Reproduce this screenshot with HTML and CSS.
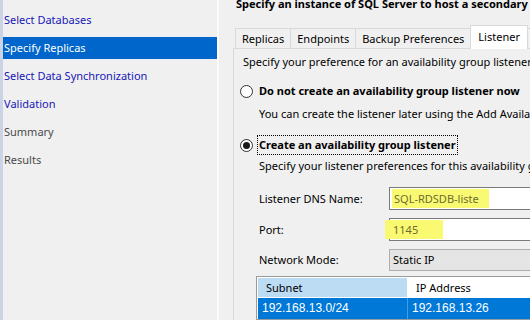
FILE: index.html
```html
<!DOCTYPE html>
<html lang="en">
  <head>
    <meta charset="UTF-8" />
    <meta name="viewport" content="width=device-width, initial-scale=1.0" />
    <title>New Availability Group</title>
    <link rel="stylesheet" href="styles.css">
  </head>
  <body>
    <div class="wizard">
      <!-- Steps list -->
      <nav class="steps">
        <a class="step">Select Databases</a>
        <a class="step step-current">Specify Replicas</a>
        <a class="step">Select Data Synchronization</a>
        <a class="step">Validation</a>
        <span class="step step-off">Summary</span>
        <span class="step step-off">Results</span>
      </nav>
      <div class="split"></div>

      <!-- Page -->
      <main class="page">
        <h1 class="page-title">Specify an instance of SQL Server to host a secondary replica.</h1>

        <div class="tabs">
          <div class="tab">Replicas</div>
          <div class="tab">Endpoints</div>
          <div class="tab">Backup Preferences</div>
          <div class="tab tab-active">Listener</div>
          <div class="tab">Read-Only Routing</div>
        </div>

        <div class="tab-panel">
          <p class="intro">Specify your preference for an availability group listener that will provide a client connection point.</p>

          <div class="option">
            <span class="radio"></span>
            <span class="option-label">Do not create an availability group listener now</span>
          </div>
          <p class="hint">You can create the listener later using the Add Availability Group Listener dialog.</p>

          <div class="option option-focus">
            <span class="radio radio-on"></span>
            <span class="option-label">Create an availability group listener</span>
          </div>
          <p class="hint hint-tight">Specify your listener preferences for this availability group.</p>

          <div class="form">
            <label class="form-label">Listener DNS Name:</label>
            <div class="field"><span class="marker">SQL-RDSDB-liste</span></div>

            <label class="form-label">Port:</label>
            <div class="field"><span class="marker marker-wide">1145</span></div>

            <label class="form-label">Network Mode:</label>
            <div class="combo">Static IP</div>
          </div>

          <div class="grid">
            <div class="grid-head">
              <div class="cell cell-sorted">Subnet</div>
              <div class="cell">IP Address</div>
            </div>
            <div class="grid-row">
              <div class="cell">192.168.13.0/24</div>
              <div class="cell">192.168.13.26</div>
            </div>
          </div>
        </div>
      </main>
    </div>
  </body>
</html>
```

FILE: styles.css
```css
/* base */
body {
  margin: 0;
  padding: 0;
  overflow: hidden;
  background: #f0f0f0;
  font-family: "Noto Sans", "Open Sans", sans-serif;
  font-size: 11px;
  color: #000;
}

p {
  margin: 0;
}

.wizard {
  display: flex;
  width: 700px;
  height: 320px;
  overflow: hidden;
  white-space: nowrap;
}

/* ===== steps ===== */
.steps {
  width: 214px;
  flex-shrink: 0;
  border-left: 3px solid #cbd3e6;
  padding-top: 9px;
  display: flex;
  flex-direction: column;
  gap: 6px;
}

.step {
  height: 22px;
  line-height: 22px;
  padding-left: 1px;
  color: #1717b8;
}

.step-current {
  background: #0066cc;
  color: #fff;
}

.step-off {
  color: #4a4a4a;
}

.split {
  width: 2px;
  flex-shrink: 0;
  background: #fbfbfb;
}

/* ===== page ===== */
.page {
  flex: 1;
  padding-left: 14px;
  display: flex;
  flex-direction: column;
}

.page-title {
  margin: -4px 0 0 3px;
  font-size: 11px;
  font-weight: bold;
  line-height: 16px;
}

.tabs {
  display: flex;
  align-items: flex-end;
  margin: 13px 0 0 2px;
  height: 23px;
}

.tab {
  height: 19px;
  line-height: 19px;
  padding: 0 6px;
  border: 1px solid #d9d9d9;
  border-bottom: none;
  margin-left: -1px;
  background: #f0f0f0;
}

.tab:first-child {
  margin-left: 0;
}

.tab-active {
  height: 23px;
  line-height: 21px;
  padding: 0 7px;
  margin: 0 -1px -1px -1px;
  background: #fff;
  position: relative;
  z-index: 1;
}

.tab-panel {
  border-top: 1px solid #d9d9d9;
  border-left: 1px solid #d9d9d9;
  padding: 5px 0 0 9px;
  flex: 1;
  display: flex;
  flex-direction: column;
}

.intro {
  line-height: 16px;
}

.option {
  display: flex;
  align-items: center;
  gap: 6px;
  margin: 13px 0 0 -3px;
  height: 16px;
}

.option-label {
  font-weight: bold;
  line-height: 16px;
}

.option-focus {
  margin-top: 13px;
  height: 20px;
  gap: 4px;
}

.option-focus .option-label {
  border: 1px dotted #000;
  padding: 1px 1px;
}

.radio {
  width: 11px;
  height: 11px;
  border: 1px solid #333;
  border-radius: 50%;
  background: #fff;
  display: flex;
  align-items: center;
  justify-content: center;
}

.radio-on::after {
  content: "";
  width: 7px;
  height: 7px;
  border-radius: 50%;
  background: #1a1a1a;
}

.hint {
  margin: 7px 0 0 16px;
  line-height: 16px;
}

.hint-tight {
  margin-top: 3px;
}

/* ===== form ===== */
.form {
  display: grid;
  grid-template-columns: 130px 1fr;
  row-gap: 8px;
  align-items: center;
  margin: 13px 0 0 16px;
}

.form-label {
  line-height: 16px;
}

.field {
  height: 21px;
  border: 1px solid #7a7a7a;
  background: #fff;
  display: flex;
  align-items: center;
  padding-left: 2px;
  color: #6e6a30;
}

.marker {
  background: #fafa72;
  line-height: 19px;
  padding: 0 10px 0 2px;
}

.marker-wide {
  margin-left: -7px;
  padding: 0 25px 0 8px;
}

.combo {
  height: 20px;
  border: 1px solid #adadad;
  background: #e5e5e5;
  line-height: 20px;
  padding-left: 3px;
}

/* ===== grid ===== */
.grid {
  margin: 5px 0 0 13px;
  border: 1px solid #9a9a9a;
  border-right: none;
  padding: 1px 0 0 1px;
  background: #fff;
  flex: 1;
  font-family: "Liberation Sans", Arial, sans-serif;
  font-size: 12px;
}

.grid-head,
.grid-row {
  display: grid;
  grid-template-columns: 150px 1fr;
}

.grid-head {
  height: 19px;
  line-height: 19px;
}

.grid-head .cell {
  padding-left: 8px;
  font-family: "Noto Sans", "Open Sans", sans-serif;
  font-size: 11px;
}

.cell-sorted {
  background: #bcdcf4;
  border-right: 1px solid #fff;
}

.grid-row {
  margin-top: 1px;
  height: 21px;
  line-height: 21px;
  background: #0078d7;
  color: #fff;
}

.grid-row .cell {
  padding-left: 4px;
}

.grid-row .cell:first-child {
  border-right: 1px solid #4a9ae0;
}
```
